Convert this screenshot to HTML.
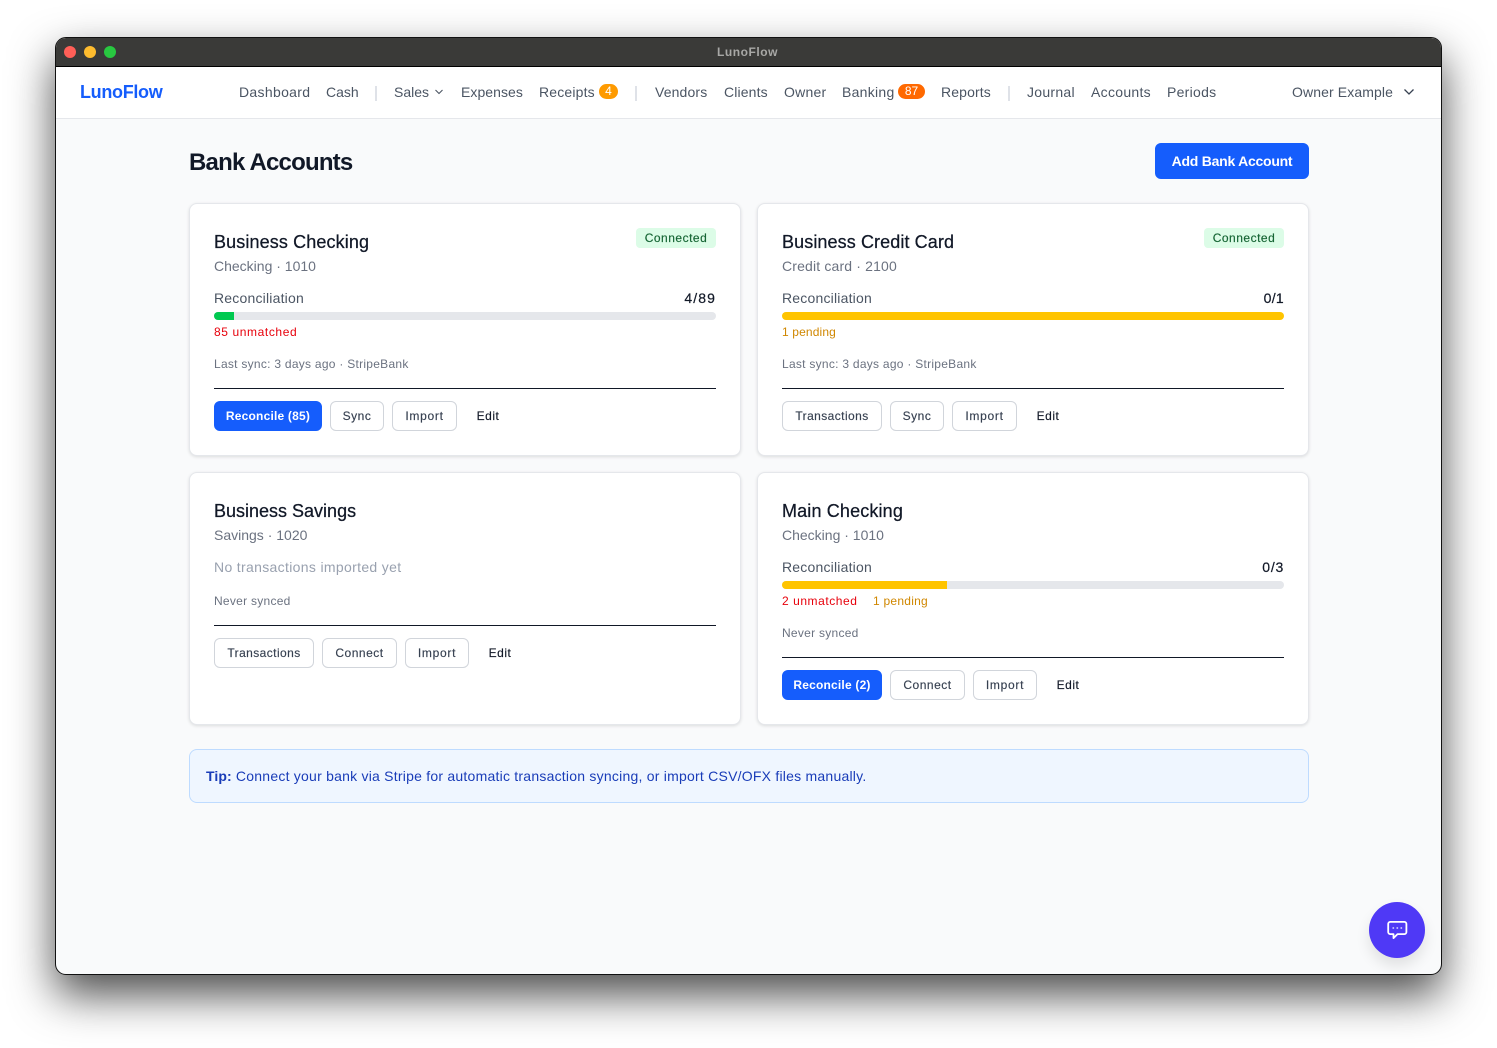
<!DOCTYPE html>
<html><head><meta charset="utf-8"><title>LunoFlow</title>
<style>
*{box-sizing:border-box}
html,body{margin:0;padding:0;width:1497px;height:1048px;overflow:hidden;background:#fff;font-family:"Liberation Sans",sans-serif}
.win{position:absolute;left:55px;top:37px;width:1387px;height:938px;border-radius:11px;border:1px solid #111;background:#f9fafb;box-shadow:0 20px 44px rgba(0,0,0,.7);}
.abs,.t,.b{position:absolute}
.t{white-space:nowrap;line-height:20px;height:20px}
.nav{font-size:14px;color:#4b5563;letter-spacing:.22px;top:82px}
.card{position:absolute;width:552px;background:#fff;border:1px solid #e5e7eb;border-radius:8px;box-shadow:0 1px 3px rgba(0,0,0,.12)}
.h{font-size:18px;color:#111827;letter-spacing:.1px;-webkit-text-stroke:.25px #111827}
.s{font-size:14px;color:#6b7280;letter-spacing:0}
.r{font-size:14px;color:#4b5563;letter-spacing:.2px}
.n{font-size:14px;color:#111827;letter-spacing:.3px;text-align:right;-webkit-text-stroke:.2px #111827}
.m{font-size:12px;color:#6b7280;letter-spacing:.27px}
.bar{position:absolute;height:8px;width:502px;background:#e5e7eb;border-radius:4px;overflow:hidden}
.bar i{display:block;height:8px}
.hr{position:absolute;height:1px;width:502px;background:#111827}
.b{height:30px;border-radius:6px;border:1px solid #d1d5db;background:#fff;font-size:12px;font-weight:400;color:#374151;text-align:center;line-height:28px;letter-spacing:.5px;white-space:nowrap;-webkit-text-stroke:.15px currentColor}
.p{background:#155dfc;border-color:#155dfc;color:#fff;font-weight:700;letter-spacing:.2px;-webkit-text-stroke:0}
.e{border:0;background:none;color:#111827;line-height:30px}
.badge{position:absolute;width:80px;height:20px;background:#dcfce7;color:#166534;border-radius:4px;font-size:12px;line-height:20px;text-align:center;letter-spacing:.5px;-webkit-text-stroke:.15px #166534}
.pill{position:absolute;height:15px;border-radius:8px;color:#fff;font-size:12px;line-height:15px;text-align:center}
.sep{position:absolute;top:86px;width:2px;height:15px;background:#dfe2e8}
</style></head><body>
<div class="win"></div>
<div class="abs" style="left:56px;top:38px;width:1385px;height:28px;background:#3a3a38;border-radius:10px 10px 0 0"></div>
<div class="abs" style="left:56px;top:66px;width:1385px;height:1px;background:#000"></div>
<div class="abs" style="left:64px;top:46px;width:12px;height:12px;border-radius:50%;background:#ff5f57"></div>
<div class="abs" style="left:84px;top:46px;width:12px;height:12px;border-radius:50%;background:#febc2e"></div>
<div class="abs" style="left:104px;top:46px;width:12px;height:12px;border-radius:50%;background:#28c840"></div>
<div class="t" style="left:55px;width:1385px;text-align:center;top:42px;font-size:12px;font-weight:700;color:#a8a8a6;letter-spacing:.55px">LunoFlow</div>

<div class="abs" style="left:56px;top:67px;width:1385px;height:52px;background:#fff;border-bottom:1px solid #e5e7eb"></div>
<div class="t" style="left:80px;top:82px;font-size:18px;font-weight:700;color:#155dfc;letter-spacing:-.32px">LunoFlow</div>
<div class="t nav" style="left:239px;letter-spacing:.32px">Dashboard</div>
<div class="t nav" style="left:326px;letter-spacing:0">Cash</div>
<div class="sep" style="left:375px"></div>
<div class="t nav" style="left:394px;letter-spacing:0">Sales</div>
<svg class="abs" style="left:434px;top:88px" width="10" height="8" viewBox="0 0 10 8"><path d="M1.500 2 5 5.500 8.500 2" fill="none" stroke="#4b5563" stroke-width="1.100"/></svg>
<div class="t nav" style="left:461px;letter-spacing:.05px">Expenses</div>
<div class="t nav" style="left:539px;letter-spacing:.17px">Receipts</div>
<div class="pill" style="left:599px;top:84px;width:19px;background:#fe9a00">4</div>
<div class="sep" style="left:635px"></div>
<div class="t nav" style="left:655px;letter-spacing:.14px">Vendors</div>
<div class="t nav" style="left:724px;letter-spacing:.14px">Clients</div>
<div class="t nav" style="left:784px">Owner</div>
<div class="t nav" style="left:842px;letter-spacing:.28px">Banking</div>
<div class="pill" style="left:898px;top:84px;width:27px;background:#ff6900">87</div>
<div class="t nav" style="left:941px;letter-spacing:.13px">Reports</div>
<div class="sep" style="left:1008px"></div>
<div class="t nav" style="left:1027px;letter-spacing:.28px">Journal</div>
<div class="t nav" style="left:1091px;letter-spacing:.3px">Accounts</div>
<div class="t nav" style="left:1167px;letter-spacing:.28px">Periods</div>
<div class="t nav" style="left:1292px;letter-spacing:.11px">Owner Example</div>
<svg class="abs" style="left:1402px;top:86px" width="14" height="12" viewBox="0 0 14 12"><path d="M2.500 3.500 7 8 11.500 3.500" fill="none" stroke="#374151" stroke-width="1.300"/></svg>

<div class="t" style="left:189px;top:153px;font-size:24px;font-weight:700;color:#111827;letter-spacing:-.8px">Bank Accounts</div>
<div class="b p" style="left:1155px;top:143px;width:154px;height:36px;line-height:34px;font-size:14px;border-radius:6px;letter-spacing:-.25px">Add Bank Account</div>

<!-- Card 1 -->
<div class="card" style="left:189px;top:203px;height:253px"></div>
<div class="t h" style="left:214px;top:232px;letter-spacing:.12px">Business Checking</div>
<div class="badge" style="left:636px;top:228px">Connected</div>
<div class="t s" style="left:214px;top:256px">Checking · 1010</div>
<div class="t r" style="left:214px;top:288px">Reconciliation</div>
<div class="t n" style="left:616px;width:100px;top:288px;letter-spacing:1.1px">4/89</div>
<div class="bar" style="left:214px;top:312px"><i style="width:20px;background:#00c950"></i></div>
<div class="t m" style="left:214px;top:322px;color:#e7000b;letter-spacing:.6px">85 unmatched</div>
<div class="t m" style="left:214px;top:354px">Last sync: 3 days ago · StripeBank</div>
<div class="hr" style="left:214px;top:388px"></div>
<div class="b p" style="left:214px;top:401px;width:108px">Reconcile (85)</div>
<div class="b" style="left:330px;top:401px;width:54px">Sync</div>
<div class="b" style="left:392px;top:401px;width:65px;letter-spacing:.7px">Import</div>
<div class="b e" style="left:465px;top:401px;width:46px">Edit</div>

<!-- Card 2 -->
<div class="card" style="left:757px;top:203px;height:253px"></div>
<div class="t h" style="left:782px;top:232px">Business Credit Card</div>
<div class="badge" style="left:1204px;top:228px">Connected</div>
<div class="t s" style="left:782px;top:256px;letter-spacing:.16px">Credit card · 2100</div>
<div class="t r" style="left:782px;top:288px">Reconciliation</div>
<div class="t n" style="left:1184px;width:100px;top:288px">0/1</div>
<div class="bar" style="left:782px;top:312px"><i style="width:502px;background:#ffc400"></i></div>
<div class="t m" style="left:782px;top:322px;color:#d08700;letter-spacing:.14px">1 pending</div>
<div class="t m" style="left:782px;top:354px">Last sync: 3 days ago · StripeBank</div>
<div class="hr" style="left:782px;top:388px"></div>
<div class="b" style="left:782px;top:401px;width:100px;letter-spacing:.42px">Transactions</div>
<div class="b" style="left:890px;top:401px;width:54px">Sync</div>
<div class="b" style="left:952px;top:401px;width:65px;letter-spacing:.7px">Import</div>
<div class="b e" style="left:1025px;top:401px;width:46px">Edit</div>

<!-- Card 3 -->
<div class="card" style="left:189px;top:472px;height:253px"></div>
<div class="t h" style="left:214px;top:501px;letter-spacing:0">Business Savings</div>
<div class="t s" style="left:214px;top:525px">Savings · 1020</div>
<div class="t s" style="left:214px;top:557px;color:#99a1af;letter-spacing:.33px">No transactions imported yet</div>
<div class="t m" style="left:214px;top:591px">Never synced</div>
<div class="hr" style="left:214px;top:625px"></div>
<div class="b" style="left:214px;top:638px;width:100px;letter-spacing:.42px">Transactions</div>
<div class="b" style="left:322px;top:638px;width:75px">Connect</div>
<div class="b" style="left:405px;top:638px;width:64px;letter-spacing:.7px">Import</div>
<div class="b e" style="left:477px;top:638px;width:46px">Edit</div>

<!-- Card 4 -->
<div class="card" style="left:757px;top:472px;height:253px"></div>
<div class="t h" style="left:782px;top:501px;letter-spacing:.15px">Main Checking</div>
<div class="t s" style="left:782px;top:525px">Checking · 1010</div>
<div class="t r" style="left:782px;top:557px">Reconciliation</div>
<div class="t n" style="left:1184px;width:100px;top:557px;letter-spacing:.75px">0/3</div>
<div class="bar" style="left:782px;top:581px"><i style="width:165px;background:#ffc400"></i></div>
<div class="t m" style="left:782px;top:591px;color:#e7000b;letter-spacing:.55px">2 unmatched</div>
<div class="t m" style="left:873px;top:591px;color:#d08700;letter-spacing:.25px">1 pending</div>
<div class="t m" style="left:782px;top:623px">Never synced</div>
<div class="hr" style="left:782px;top:657px"></div>
<div class="b p" style="left:782px;top:670px;width:100px">Reconcile (2)</div>
<div class="b" style="left:890px;top:670px;width:75px">Connect</div>
<div class="b" style="left:973px;top:670px;width:64px;letter-spacing:.7px">Import</div>
<div class="b e" style="left:1045px;top:670px;width:46px">Edit</div>

<!-- Tip -->
<div class="abs" style="left:189px;top:749px;width:1120px;height:54px;background:#eff6ff;border:1px solid #bedbff;border-radius:8px"></div>
<div class="t" style="left:206px;top:766px;font-size:14px;color:#193cb8;letter-spacing:.23px"><b style="letter-spacing:.1px">Tip:</b> Connect your bank via Stripe for automatic transaction syncing, or import CSV/OFX files manually.</div>

<!-- Chat -->
<div class="abs" style="left:1369px;top:902px;width:56px;height:56px;border-radius:50%;background:#4f39f6;box-shadow:0 8px 14px rgba(0,0,0,.1)"></div>
<svg class="abs" style="left:1385px;top:918px" width="24" height="24" viewBox="0 0 24 24"><path d="M5.200 3.900h14.200a2 2 0 0 1 2 2v8.200a2 2 0 0 1-2 2h-6.900l-4 4v-4H5.200a2 2 0 0 1-2-2V5.900a2 2 0 0 1 2-2Z" fill="none" stroke="#fff" stroke-width="1.800" stroke-linejoin="round"/><circle cx="8.300" cy="10" r=".95" fill="#c6c0fb"/><circle cx="12.300" cy="10" r=".95" fill="#c6c0fb"/><circle cx="16.300" cy="10" r=".95" fill="#c6c0fb"/></svg>
</body></html>
